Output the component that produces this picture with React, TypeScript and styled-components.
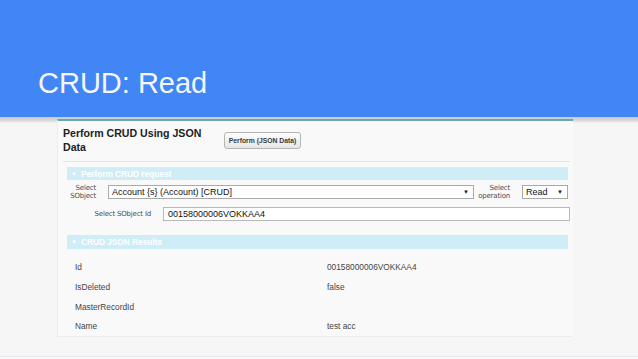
import React from "react";
import styled, { createGlobalStyle } from "styled-components";

const GlobalStyle = createGlobalStyle`
  html, body {
    margin: 0;
    padding: 0;
    background: #f6f6f6;
  }
  * {
    box-sizing: border-box;
  }
`;

const Slide = styled.div`
  width: 638px;
  height: 359px;
  overflow: hidden;
  display: flex;
  flex-direction: column;
  background: #f6f6f6;
  font-family: "Liberation Sans", Arial, sans-serif;
`;

const Banner = styled.header`
  height: 117px;
  flex-shrink: 0;
  background: #4285f4;
  padding: 66px 0 0 38px;
`;

const SlideTitle = styled.h1`
  margin: 0;
  font-size: 29px;
  line-height: 34px;
  font-weight: 400;
  color: #f4f7fd;
`;

const Stage = styled.main`
  flex: 1;
  padding: 2px 65px 0 57px;
  border-bottom: 1px solid #e3eaf1;
  background: linear-gradient(
    to bottom,
    #c9c9c9 0px,
    #dcdcdc 4px,
    #f6f6f6 6px,
    #f6f6f6 100%
  );
`;

const FootStrip = styled.div`
  height: 2px;
  flex-shrink: 0;
  background: #f8f8f8;
`;

const Panel = styled.section`
  width: 516px;
  height: 218px;
  background: #f9f9f9;
  border-top: 2px solid #63a9b8;
  border-left: 1px solid #ececec;
  border-bottom: 1px solid #ececec;
  display: flex;
  flex-direction: column;
`;

const PanelHead = styled.div`
  display: flex;
  align-items: flex-start;
  margin: 0 3px 0 5px;
  padding: 5px 0 7px;
  border-bottom: 1px solid #e3e3e3;
`;

const PanelTitle = styled.h2`
  width: 161px;
  margin: 0;
  font-size: 10.6px;
  line-height: 14px;
  font-weight: 700;
  color: #222;
`;

const ActionButton = styled.button`
  margin-top: 6px;
  width: 77px;
  height: 17px;
  padding: 0;
  font-family: "Liberation Sans", Arial, sans-serif;
  font-size: 6.8px;
  font-weight: 700;
  color: #3a3a3a;
  background: linear-gradient(#fdfdfd, #e6e6e6);
  border: 1px solid #b5b5b5;
  border-radius: 3px;
`;

const SectionBar = styled.div<{ gap: number }>`
  margin: ${(p) => p.gap}px 5px 0 9px;
  height: 15px;
  padding-left: 4px;
  display: flex;
  align-items: center;
  gap: 4px;
  background: #cfedf7;
  color: #ffffff;
  font-size: 8.3px;
  font-weight: 700;
`;

const Caret = styled.span`
  font-size: 6px;
`;

const FieldRow = styled.div<{ top: number }>`
  display: flex;
  align-items: center;
  margin: ${(p) => p.top}px 0 0 8px;
`;

const FieldLabel = styled.label<{ w: number }>`
  width: ${(p) => p.w}px;
  text-align: right;
  font-size: 7px;
  line-height: 8px;
  color: #4d4d4d;
  font-family: "DejaVu Sans", Verdana, sans-serif;
  letter-spacing: -0.2px;
`;

const SelectBox = styled.div<{ w: number; ml: number }>`
  width: ${(p) => p.w}px;
  margin-left: ${(p) => p.ml}px;
  height: 14px;
  padding: 0 4px 0 3px;
  display: flex;
  align-items: center;
  justify-content: space-between;
  background: #ffffff;
  border: 1px solid #a9a9a9;
  font-size: 9px;
  color: #111;
`;

const Arrow = styled.span`
  font-size: 6px;
  color: #222;
`;

const TextInput = styled.div`
  width: 407px;
  margin-left: 12px;
  height: 14px;
  padding-left: 4px;
  display: flex;
  align-items: center;
  background: #ffffff;
  border: 1px solid #b8b8b8;
  font-size: 9px;
  color: #111;
`;

const Results = styled.div`
  margin: 9px 0 0 17px;
  display: grid;
  grid-template-columns: 252px 1fr;
  grid-auto-rows: 19.6px;
  align-items: center;
  font-size: 8.3px;
  color: #444;
`;

const results: [string, string][] = [
  ["Id", "00158000006VOKKAA4"],
  ["IsDeleted", "false"],
  ["MasterRecordId", ""],
  ["Name", "test acc"],
];

export default function App() {
  return (
    <>
      <GlobalStyle />
      <Slide>
        <Banner>
          <SlideTitle>CRUD: Read</SlideTitle>
        </Banner>
        <Stage>
          <Panel>
            <PanelHead>
              <PanelTitle>Perform CRUD Using JSON Data</PanelTitle>
              <ActionButton type="button">Perform (JSON Data)</ActionButton>
            </PanelHead>
            <SectionBar gap={5}>
              <Caret>▼</Caret>Perform CRUD request
            </SectionBar>
            <FieldRow top={4}>
              <FieldLabel w={30}>
                Select
                <br />
                SObject
              </FieldLabel>
              <SelectBox w={366} ml={12}>
                <span>Account {"{s}"} (Account) [CRUD]</span>
                <Arrow>▼</Arrow>
              </SelectBox>
              <FieldLabel w={36}>
                Select
                <br />
                operation
              </FieldLabel>
              <SelectBox w={46} ml={12}>
                <span>Read</span>
                <Arrow>▼</Arrow>
              </SelectBox>
            </FieldRow>
            <FieldRow top={7}>
              <FieldLabel w={85}>Select SObject Id</FieldLabel>
              <TextInput>00158000006VOKKAA4</TextInput>
            </FieldRow>
            <SectionBar gap={14}>
              <Caret>▼</Caret>CRUD JSON Results
            </SectionBar>
            <Results>
              {results.map(([k, v]) => (
                <React.Fragment key={k}>
                  <span>{k}</span>
                  <span>{v}</span>
                </React.Fragment>
              ))}
            </Results>
          </Panel>
        </Stage>
        <FootStrip />
      </Slide>
    </>
  );
}
